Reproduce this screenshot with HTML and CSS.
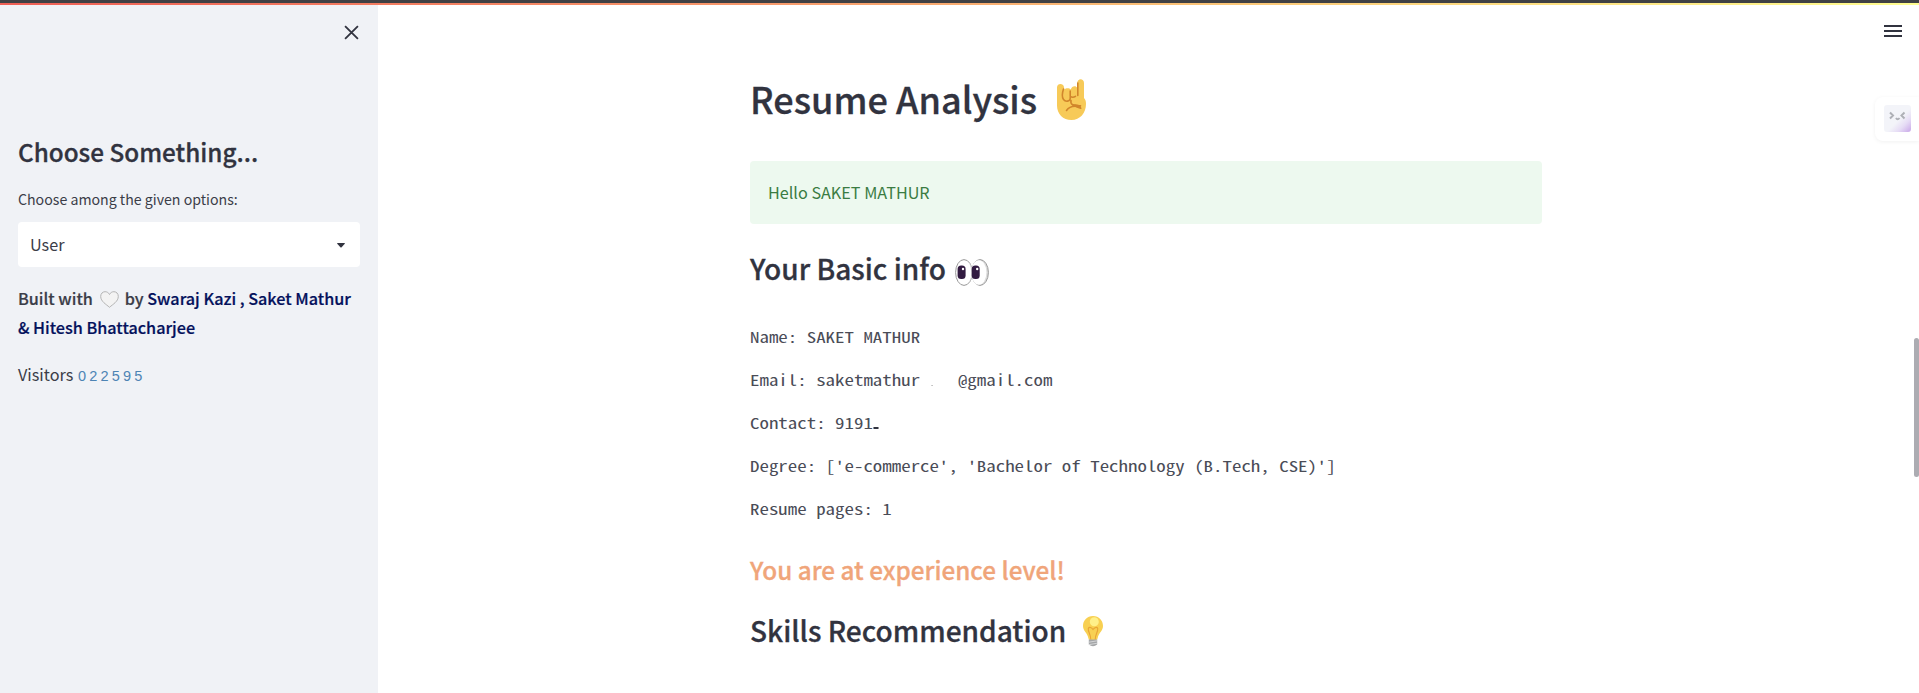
FILE: index.html
```html
<!DOCTYPE html>
<html lang="en">
<head>
<meta charset="utf-8">
<title>Resume Analysis</title>
<link rel="stylesheet" href="styles.css">
</head>
<body>
<div class="topline"></div>
<div class="app">
  <aside class="sidebar">
    <div class="close-row">
      <svg class="close" viewBox="0 0 14 14"><path d="M1 1L13 13M13 1L1 13"/></svg>
    </div>
    <h2 class="side-title">Choose Something...</h2>
    <label class="label">Choose among the given options:</label>
    <div class="select"><span>User</span><svg class="caret" viewBox="0 0 8 5"><path d="M0 0.6Q0 0 0.8 0H7.2Q8 0 8 0.6L4.6 4.3Q4 4.8 3.4 4.3Z"/></svg></div>
    <p class="built">Built with <svg class="heart" viewBox="0 0 19 17"><path d="M9.500 16.300C6 13.200 .8 10.500 .7 5.500C.6 2.500 2.800 .7 5.100 .7C7 .7 8.600 1.700 9.500 3.500C10.400 1.700 12 .7 13.900 .7C16.200 .7 18.400 2.500 18.300 5.500C18.200 10.500 13 13.200 9.500 16.300Z" fill="#f3f3f3" stroke="#b4b4b4" stroke-width="1"/></svg> by <a>Swaraj Kazi , Saket Mathur<br>&amp; Hitesh Bhattacharjee</a></p>
    <p class="visitors">Visitors <span class="counter">022595</span></p>
  </aside>
  <main class="main">
    <div class="content">
      <h1 class="title">Resume Analysis <svg class="hand" viewBox="0 0 29 41">
        <path d="M0 8.500C0 4 6.500 4 7 8L7.300 10.500C9 8.800 12.500 9 13.800 10.500C14.500 7 19 6 20.300 9V4C20.300-1 27-1 27 4V19C28.500 20.500 29 22 29 25C29 34 23 41 14.500 41C6 41 0 35 0 26.500Z" fill="#f7ca58"/>
        <path d="M20.800 4V16.500M6.500 10C5.500 13 4.700 18 6.500 20.500C8.500 23.200 13 22.500 13.200 19.500V12M13.200 17.500C15 18.500 17 18.300 18.500 17.300M14 21.500C13 26 17 27 23.500 26.800M9.500 31.500C11.500 28.500 14.500 27.200 18.500 27.300C21 28.500 22.500 29 23.800 29.200" fill="none" stroke="#d1862c" stroke-width="1.600" stroke-linecap="round"/>
        <path d="M15.500 25C19 25.500 24.500 25 24 29.200C21.500 29.500 20 27.800 16.500 27Z" fill="#d1862c"/>
      </svg></h1>
      <div class="alert">Hello SAKET MATHUR</div>
      <h2 class="heading">Your Basic info <svg class="eyes" viewBox="0 0 34 27">
        <ellipse cx="25" cy="13.500" rx="8.400" ry="12.900" fill="#ddd" stroke="#999"/>
        <ellipse cx="23.800" cy="13.500" rx="7.600" ry="12.200" fill="#fff"/>
        <ellipse cx="9" cy="13.500" rx="8.400" ry="12.900" fill="#fff" stroke="#999"/>
        <path d="M13 2.500C19 7 19 20 13 24.500C18 20 17 7 13 2.500Z" fill="#ddd"/>
        <rect x="2.600" y="6.500" width="8" height="13.600" rx="3.600" fill="#321b41"/>
        <rect x="16.700" y="6.500" width="8" height="13.600" rx="3.600" fill="#321b41"/>
        <circle cx="8" cy="10" r="1.200" fill="#fff"/><circle cx="22.200" cy="10" r="1.200" fill="#fff"/>
      </svg></h2>
      <div class="info">
        <p>Name: SAKET MATHUR</p>
        <p>Email: saketmathur<span class="mask"><i class="speck"></i></span>@gmail.com</p>
        <p>Contact: 9191<i class="dash"></i></p>
        <p>Degree: ['e-commerce', 'Bachelor of Technology (B.Tech, CSE)']</p>
        <p>Resume pages: 1</p>
      </div>
      <h4 class="level">You are at experience level!</h4>
      <h2 class="heading skills">Skills Recommendation <svg class="bulb" viewBox="0 0 20 31">
        <path d="M10 0C4 0 0 4.500 0 10C0 15 4.500 17 5.300 22Q5.500 24 7 24H13Q14.500 24 14.700 22C15.500 17 20 15 20 10C20 4.500 16 0 10 0Z" fill="#f8d052"/>
        <path d="M7.800 23.500C7.800 18.500 4.800 15.500 5.300 12.500C6.200 10.500 8.500 11.500 10 13.500C11.500 11.500 14 10.500 14.700 12.500C15.200 15.500 12.200 18.500 12.200 23.500" fill="none" stroke="#e8a436" stroke-width="1.100"/>
        <circle cx="11.300" cy="5.800" r="4.500" fill="#fff08a"/>
        <path d="M5.800 23.500H14.200V28.500Q10 32 5.800 28.500Z" fill="#a4a6a8"/>
        <path d="M5.800 26.200L14.200 24.800M5.800 28.700L14.200 27.200" stroke="#e0e1e2" stroke-width=".8"/>
      </svg></h2>
    </div>
  </main>
</div>
<svg class="menu" viewBox="0 0 18 12"><path d="M0 1H18M0 6H18M0 11H18"/></svg>
<div class="widget"><svg class="face" viewBox="0 0 27 27"><path d="M6 7.500L9 10.500L6 13.500M20.500 7.500L17.500 10.500L20.500 13.500M12 13Q13.500 15.500 15.500 13"/></svg></div>
<div class="scrollbar"></div>
</body>
</html>
```
FILE: styles.css
```css
* { box-sizing: border-box; }
body {
  margin: 0;
  height: 693px;
  overflow: hidden;
  background: #fff;
  color: #3b3d48;
  font: 400 16.2px/28px "Noto Sans CJK JP", "Noto Sans CJK SC", sans-serif;
}
h1, h2, h4, p { margin: 0; font-weight: 500; }
h1, h2 { color: #31333f; }
p { font-weight: 400; }
h1, h2, h4 { -webkit-text-stroke: 0.3px currentColor; }
.built { -webkit-text-stroke: 0.2px currentColor; }
h1 svg, h2 svg, .built svg { overflow: visible; }
.topline {
  height: 5px;
  border-top: 3px solid #404144;
  background: linear-gradient(90deg, #ee5f55, #f79a6c 40%, #fbc878 65%, #fffd90) padding-box;
}
.app { display: flex; height: 688px; }
.sidebar { width: 378px; padding: 0 18px; background: #f0f2f6; }
.close-row { display: flex; justify-content: flex-end; height: 122px; padding: 20px 1px 0 0; }
.close { width: 15px; height: 15px; fill: none; stroke: #31333f; stroke-width: 1.7; }
.side-title { font-size: 24.3px; line-height: 32px; padding-top: 9px; }
.label { display: block; margin-top: 19px; font-size: 14.17px; line-height: 24px; }
.select {
  display: flex;
  align-items: center;
  justify-content: space-between;
  height: 45px;
  margin-top: 11px;
  padding: 0 15px 0 12px;
  border-radius: 4px;
  background: #fff;
}
.select span { padding-bottom: 2px; }
.caret { width: 8px; height: 5px; margin-top: 1px; fill: #31333f; }
.built { margin-top: 17px; font-size: 16.2px; line-height: 29px; font-weight: 500; white-space: nowrap; }
.built a { color: #04115c; }
.heart { width: 19px; height: 17px; margin: 0 2.5px 0 3px; vertical-align: -3px; }
.visitors { margin-top: 18px; }
.counter { margin-left: 1px; font: 14.5px/20px "Liberation Sans", Arial, sans-serif; letter-spacing: 3.2px; color: #4d84b4; }
.main { flex: 1; display: flex; justify-content: center; }
.content { width: 792px; margin-right: 5px; padding-top: 63px; }
.title { font-size: 36.1px; line-height: 60px; height: 60px; }
.hand { width: 29px; height: 41px; margin-left: 12px; vertical-align: -6px; }
.alert {
  height: 63px;
  margin-top: 33px;
  padding: 17px 18px;
  border-radius: 4px;
  background: #edf9ef;
  color: #3a7c42;
}
.heading { height: 40px; margin-top: 24px; font-size: 28.05px; line-height: 40px; }
.eyes { width: 34px; height: 27px; margin-left: 3px; vertical-align: -6px; }
.bulb { width: 20px; height: 31px; margin-left: 10px; vertical-align: -5px; }
.info {
  width: 630px;
  margin-top: 26.6px;
  font: 15px/43.2px "Noto Sans Mono CJK JP", "Noto Sans Mono CJK SC", "Liberation Mono", monospace;
  color: #4a4c57;
  transform: scaleX(1.26);
  transform-origin: 0 0;
}
.info p { height: 43.2px; }
.mask { display: inline-block; width: 30px; padding-left: 8.5px; }
.speck { display: inline-block; width: 1px; height: 1px; background: #aaa; }
.dash { display: inline-block; width: 4px; height: 1.5px; background: #31333f; }
.level { margin-top: 19.4px; font-size: 24.3px; line-height: 40px; color: #f0a57a; }
.skills { margin-top: 20px; }
.menu { position: absolute; left: 1884px; top: 25px; width: 18px; height: 12px; stroke: #31333f; stroke-width: 2; }
.widget {
  position: absolute;
  right: 0;
  top: 97px;
  width: 44px;
  height: 44px;
  padding: 8px 9px;
  border-radius: 8px 0 0 8px;
  background: #fff;
  box-shadow: 0 1px 4px rgba(0, 0, 0, .06);
}
.face {
  display: block;
  width: 27px;
  height: 27px;
  border-radius: 3px;
  background: linear-gradient(135deg, #f3f4f9 55%, #e6dcf5 75%, #c8a6e8);
  fill: none;
  stroke: #aeb0b6;
  stroke-width: 2;
}
.scrollbar { position: absolute; right: 0; top: 338px; width: 5px; height: 139px; border-radius: 3px; background: #acacb2; }
```
